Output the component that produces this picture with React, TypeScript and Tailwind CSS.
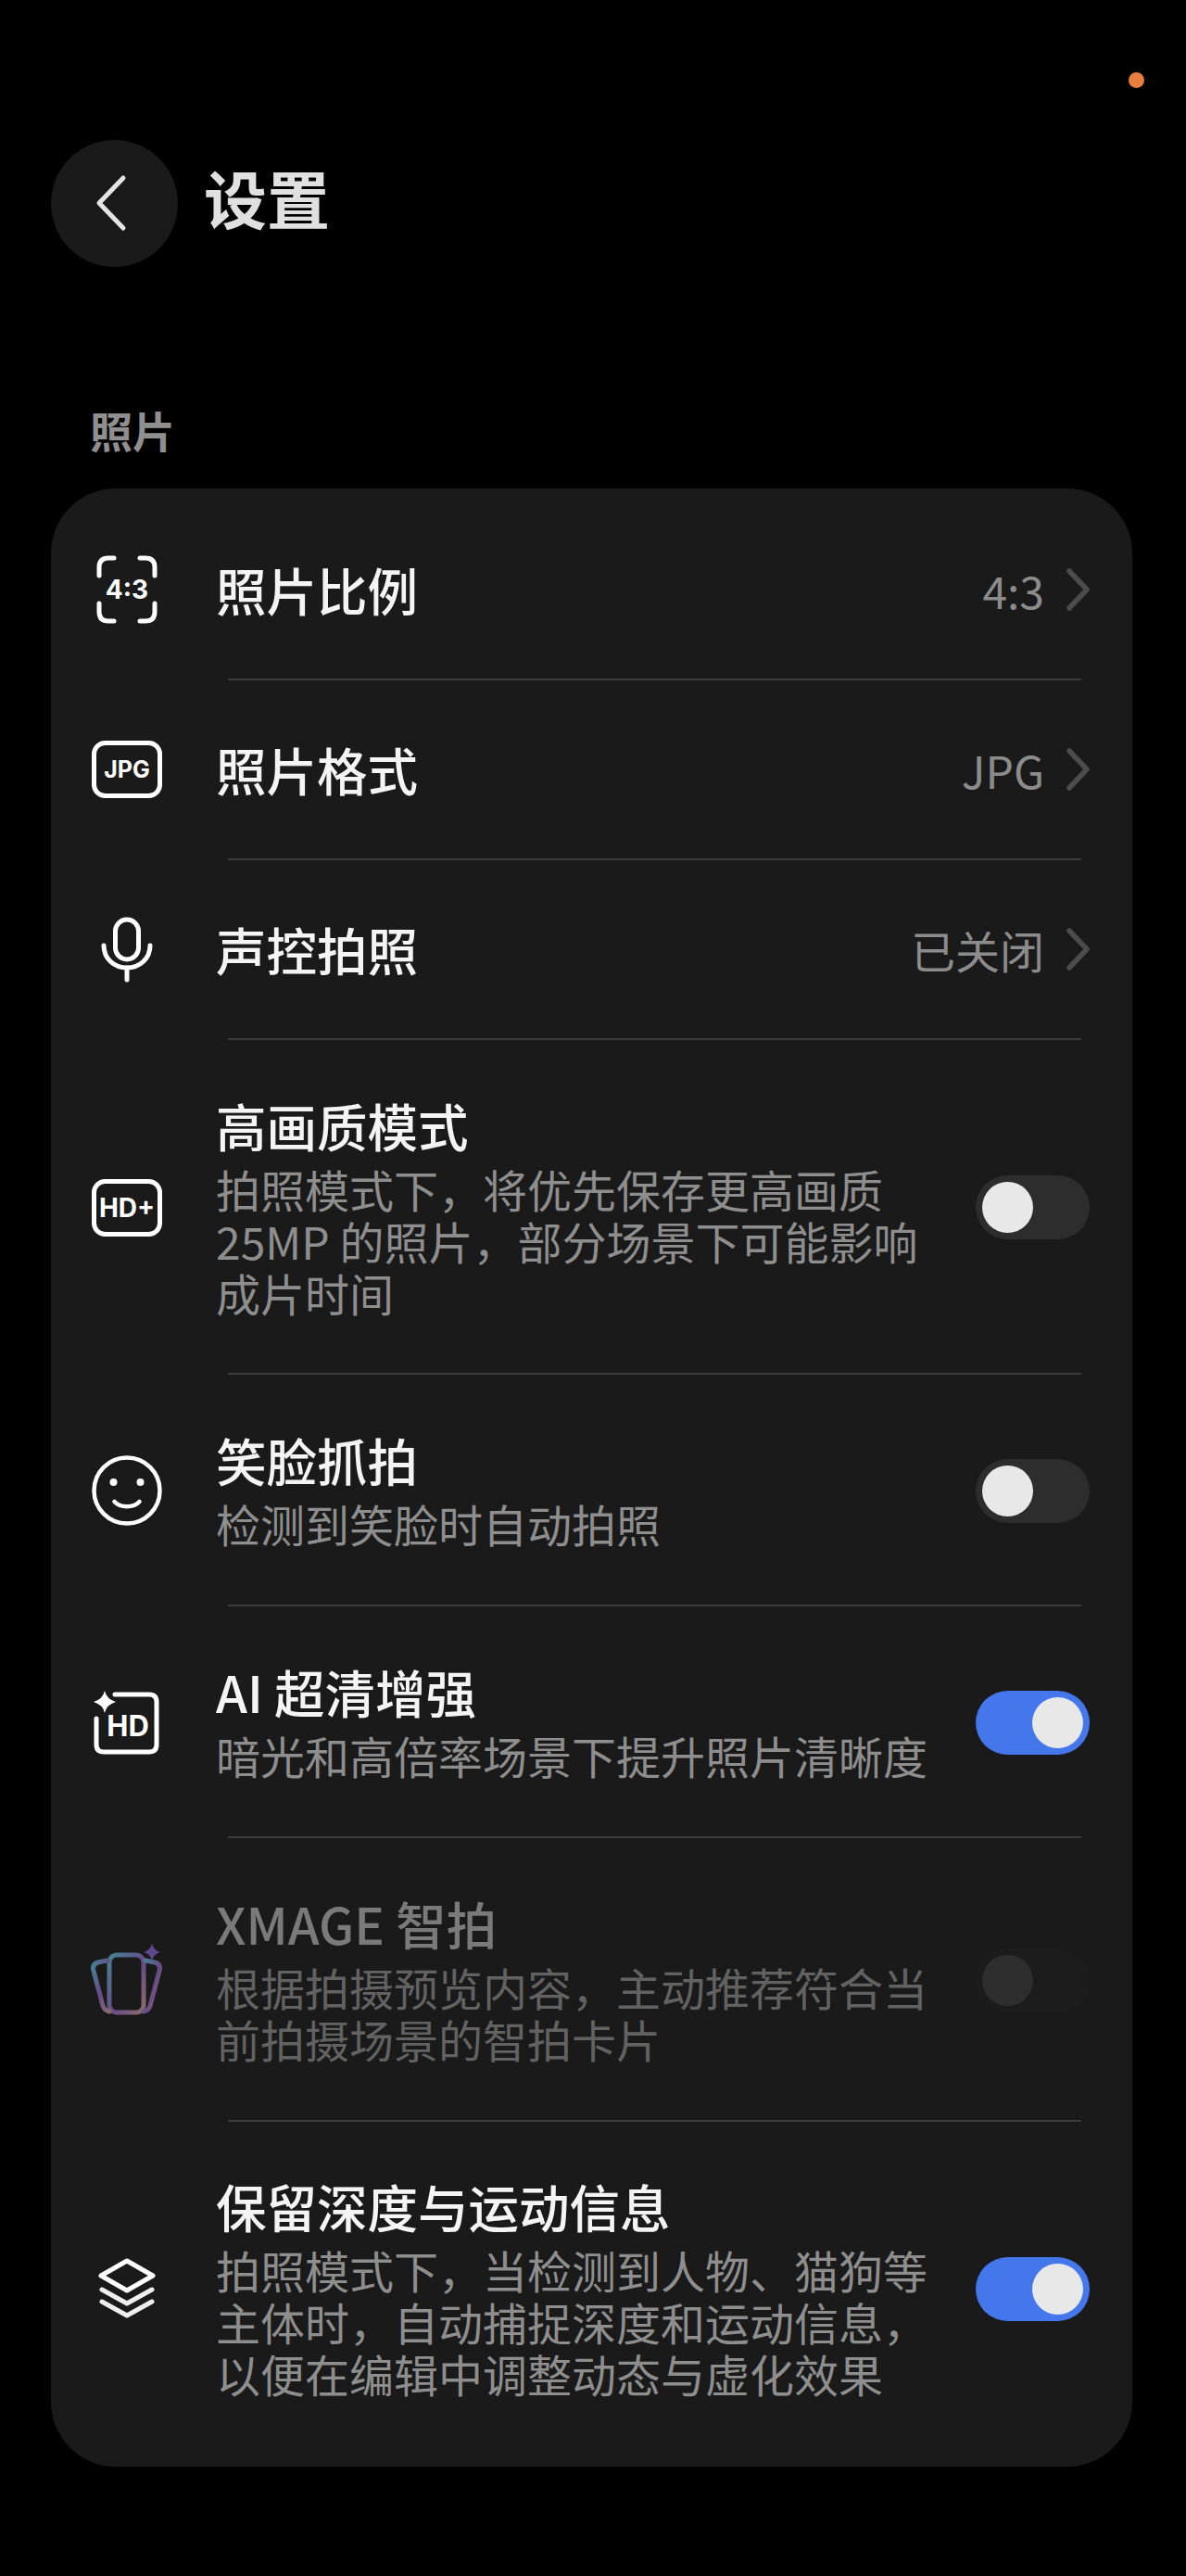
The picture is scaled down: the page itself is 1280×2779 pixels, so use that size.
import React from 'react';

const FONT = '[font-family:"Noto_Sans_CJK_SC","Noto_Sans",sans-serif]';

const Toggle = ({ state }: { state: 'on' | 'off' | 'disabled' }) => {
  const track =
    state === 'on' ? 'bg-[#4476ec] justify-end' : state === 'off' ? 'bg-[#2d2d2d] justify-start' : 'bg-[#1c1c1c] justify-start';
  const knob = state === 'disabled' ? 'bg-[#2e2e2e]' : 'bg-[#e8e8e8]';
  return (
    <div className={`flex h-[69px] w-[123px] shrink-0 items-center rounded-full px-[7px] ${track}`}>
      <div className={`h-[55px] w-[55px] rounded-full ${knob}`} />
    </div>
  );
};

const Chevron = () => (
  <svg width="30" height="50" viewBox="0 0 30 50" fill="none" className="shrink-0">
    <path d="M8 5 L27 25 L8 45" stroke="#4c4c4c" strokeWidth="5.5" strokeLinecap="round" strokeLinejoin="round" />
  </svg>
);

const svgText = { fontFamily: 'Inter, "Liberation Sans", sans-serif', fontWeight: 700 };

const RatioIcon = () => (
  <svg width="80" height="80" viewBox="0 0 80 80" fill="none" stroke="white" strokeWidth="5" strokeLinecap="round">
    <path d="M26 6 H20 Q10 6 10 16 V25" />
    <path d="M54 6 H60 Q70 6 70 16 V25" />
    <path d="M10 55 V64 Q10 74 20 74 H26" />
    <path d="M70 55 V64 Q70 74 60 74 H54" />
    <text x="40" y="50" textAnchor="middle" fontSize="28" fill="white" stroke="none" style={svgText}>4:3</text>
  </svg>
);

const BoxIcon = ({ label, size }: { label: string; size: number }) => (
  <svg width="80" height="80" viewBox="0 0 80 80" fill="none">
    <rect x="4.5" y="11.5" width="71" height="57" rx="12" stroke="white" strokeWidth="5" />
    <text x="40" y={40 + size * 0.36} textAnchor="middle" fontSize={size} fill="white" style={svgText}>{label}</text>
  </svg>
);

const MicIcon = () => (
  <svg width="80" height="80" viewBox="0 0 80 80" fill="none" stroke="white" strokeWidth="5" strokeLinecap="round">
    <rect x="27.5" y="8" width="25" height="43" rx="12.5" />
    <path d="M15 36 C15 50 26 60 40 60 C54 60 65 50 65 36" />
    <path d="M40 60 V73" />
  </svg>
);

const SmileIcon = () => (
  <svg width="80" height="80" viewBox="0 0 80 80" fill="none" stroke="white" strokeWidth="4.5" strokeLinecap="round">
    <circle cx="40" cy="40" r="35.5" />
    <circle cx="25.5" cy="31" r="4" fill="white" stroke="none" />
    <circle cx="54.5" cy="31" r="4" fill="white" stroke="none" />
    <path d="M26.5 52 C33 59 47 59 53.5 52" />
  </svg>
);

const HdIcon = () => (
  <svg width="80" height="80" viewBox="0 0 80 80" fill="none">
    <path d="M27 10 H64 Q72 10 72 18 V64 Q72 72 64 72 H15 Q7 72 7 64 V36" stroke="white" strokeWidth="5" strokeLinecap="round" />
    <path d="M16 6 Q18 15 28 18 Q18 21 16 30 Q14 21 4 18 Q14 15 16 6 Z" fill="white" />
    <text x="41" y="55" textAnchor="middle" fontSize="31" fill="white" style={svgText}>HD</text>
  </svg>
);

const XmageIcon = () => (
  <svg width="80" height="80" viewBox="0 0 80 80" fill="none" opacity="0.85">
    <defs>
      <linearGradient id="xmage" x1="0" y1="0" x2="1" y2="1">
        <stop offset="0" stopColor="#4f93a8" />
        <stop offset="0.55" stopColor="#75559c" />
        <stop offset="1" stopColor="#a07a78" />
      </linearGradient>
    </defs>
    <rect x="21" y="13" width="37" height="62" rx="8" stroke="url(#xmage)" strokeWidth="5" />
    <path d="M19 19 L9 21 Q2 23 4 30 L14 68 Q16 73 21 74" stroke="url(#xmage)" strokeWidth="5" strokeLinecap="round" />
    <path d="M60 19 L70 21 Q77 23 75 30 L65 68 Q63 73 58 74" stroke="url(#xmage)" strokeWidth="5" strokeLinecap="round" />
    <path d="M67 1 Q69 8 76 10 Q69 12 67 19 Q65 12 58 10 Q65 8 67 1 Z" fill="#6a4fa0" />
  </svg>
);

const LayersIcon = () => (
  <svg width="80" height="80" viewBox="0 0 80 80" fill="none" stroke="white" strokeWidth="5" strokeLinecap="round" strokeLinejoin="round">
    <path d="M40 10 L68 26 L40 42 L12 26 Z" />
    <path d="M13 41 L40 56 L67 41" stroke="#eeeeee" />
    <path d="M13 54 L40 69 L67 54" stroke="#eeeeee" />
  </svg>
);

type Row = {
  icon: React.ReactNode;
  title: string;
  desc?: string[];
  value?: string;
  toggle?: 'on' | 'off' | 'disabled';
  dim?: boolean;
  height: string;
};

const rows: Row[] = [
  { icon: <RatioIcon />, title: '照片比例', value: '4:3', height: 'h-[205px] pt-[13px]' },
  { icon: <BoxIcon label="JPG" size={25} />, title: '照片格式', value: 'JPG', height: 'h-[192px]' },
  { icon: <MicIcon />, title: '声控拍照', value: '已关闭', height: 'h-[192px]' },
  {
    icon: <BoxIcon label="HD+" size={28} />,
    title: '高画质模式',
    desc: ['拍照模式下，将优先保存更高画质', '25MP 的照片，部分场景下可能影响', '成片时间'],
    toggle: 'off',
    height: 'h-[359px] pt-[2px]',
  },
  { icon: <SmileIcon />, title: '笑脸抓拍', desc: ['检测到笑脸时自动拍照'], toggle: 'off', height: 'h-[248px] pt-[2px]' },
  { icon: <HdIcon />, title: 'AI 超清增强', desc: ['暗光和高倍率场景下提升照片清晰度'], toggle: 'on', height: 'h-[248px] pt-[2px]' },
  {
    icon: <XmageIcon />,
    title: 'XMAGE 智拍',
    desc: ['根据拍摄预览内容，主动推荐符合当', '前拍摄场景的智拍卡片'],
    toggle: 'disabled',
    dim: true,
    height: 'h-[304px] pt-[2px]',
  },
  {
    icon: <LayersIcon />,
    title: '保留深度与运动信息',
    desc: ['拍照模式下，当检测到人物、猫狗等', '主体时，自动捕捉深度和运动信息，', '以便在编辑中调整动态与虚化效果'],
    toggle: 'on',
    height: 'h-[372px] pb-[12px]',
  },
];

const SettingRow = ({ row }: { row: Row }) => (
  <div className={`flex items-center pr-[46px] ${row.height}`}>
    <div className="flex w-[164px] shrink-0 justify-center">{row.icon}</div>
    <div className={`ml-[14px] min-w-0 flex-1 ${row.desc ? 'pb-[2px]' : ''}`}>
      <div className={`text-[54.5px] leading-[64px] font-medium ${row.dim ? 'text-[#7a7a7a]' : 'text-[#f4f4f4]'}`}>{row.title}</div>
      {row.desc && (
        <div className={`mt-[8px] text-[48px] leading-[56px] ${row.dim ? 'text-[#626262]' : 'text-[#8e8e8e]'}`}>
          {row.desc.map((line) => (
            <div key={line} className="whitespace-nowrap">{line}</div>
          ))}
        </div>
      )}
    </div>
    {row.value && (
      <div className="flex items-center gap-[19px]">
        <span className="text-[48px] leading-[56px] text-[#8c8c8c]">{row.value}</span>
        <Chevron />
      </div>
    )}
    {row.toggle && <Toggle state={row.toggle} />}
  </div>
);

export default function App() {
  return (
    <div className={`relative min-h-[2779px] bg-black px-[55px] pt-[151px] ${FONT}`}>
      {/* status dot */}
      <div className="absolute top-[78px] left-[1218px] h-[17px] w-[17px] rounded-full bg-[#e87f3c]" />

      <header className="flex items-center gap-[28px]">
        <button className="flex h-[137px] w-[137px] items-center justify-center rounded-full bg-[#1a1a1a]">
          <svg width="40" height="64" viewBox="0 0 40 64" fill="none" className="mr-[6px]">
            <path d="M32 4 L6 31 L32 58" stroke="#e4e4e4" strokeWidth="5" strokeLinecap="round" strokeLinejoin="round" />
          </svg>
        </button>
        <h1 className="pb-[14px] text-[68px] leading-[80px] font-bold text-[#e0e0e0]">设置</h1>
      </header>

      <div className="mt-[145px] ml-[42px] text-[46px] leading-[60px] font-bold text-[#8f8f8f]">照片</div>

      <section className="mt-[34px] w-[1167px] overflow-hidden rounded-[70px] bg-[#1a1a1a]">
        {rows.map((row, i) => (
          <div key={row.title}>
            {i > 0 && <div className="mr-[55px] ml-[191px] h-[2px] bg-[#3c3c3c]" />}
            <SettingRow row={row} />
          </div>
        ))}
      </section>
    </div>
  );
}
